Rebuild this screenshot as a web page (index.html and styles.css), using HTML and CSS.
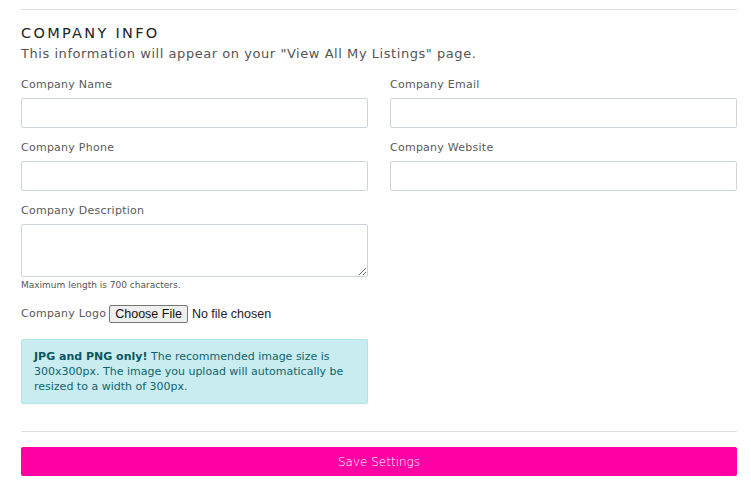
FILE: index.html
```html
<!DOCTYPE html>
<html>
<head>
<meta charset="utf-8">
<link rel="stylesheet" href="styles.css">
</head>
<body>
<div class="page">
  <hr class="rule top-rule">
  <h2 class="title">COMPANY INFO</h2>
  <p class="intro">This information will appear on your "View All My Listings" page.</p>
  <div class="grid">
    <div class="group">
      <label class="label">Company Name</label>
      <input class="input" type="text">
    </div>
    <div class="group">
      <label class="label">Company Email</label>
      <input class="input" type="text">
    </div>
    <div class="group">
      <label class="label">Company Phone</label>
      <input class="input" type="text">
    </div>
    <div class="group">
      <label class="label">Company Website</label>
      <input class="input" type="text">
    </div>
    <div class="group left">
      <label class="label">Company Description</label>
      <textarea class="textarea"></textarea>
      <div class="help">Maximum length is 700 characters.</div>
    </div>
    <div class="logo-row left">
      <span class="label inline">Company Logo</span><span class="file-btn">Choose File</span><span class="file-text">No file chosen</span>
    </div>
    <div class="alert left"><strong>JPG and PNG only!</strong> The recommended image size is 300x300px. The image you upload will automatically be resized to a width of 300px.</div>
  </div>
  <hr class="rule bottom-rule">
  <button class="save">Save Settings</button>
</div>
</body>
</html>
```
FILE: styles.css
```css
* { box-sizing: border-box; }
body {
  margin: 0;
  background: #fff;
  font-family: "DejaVu Sans", "Open Sans", sans-serif;
  color: #555;
}
.page {
  padding: 9px 14px 0 21px;
}
.rule {
  border: 0;
  border-top: 1px solid #dedede;
  margin: 0;
}
.title {
  margin: 14px 0 0;
  font-size: 14.5px;
  line-height: 18px;
  font-weight: 400;
  color: #222;
  letter-spacing: 2.3px;
}
.intro {
  margin: 3px 0 0;
  font-size: 13px;
  line-height: 18px;
  color: #555;
  letter-spacing: 0.55px;
}
.grid {
  display: grid;
  grid-template-columns: 347px 347px;
  column-gap: 22px;
  margin-top: 13px;
  align-items: start;
}
.left { grid-column: 1; }
.group {
  display: flex;
  flex-direction: column;
  margin-bottom: 11px;
}
.label {
  font-size: 11px;
  line-height: 16px;
  color: #5a5a5a;
  padding-top: 1px;
  margin-bottom: 5px;
  letter-spacing: 0.25px;
}
.label.inline { margin: 0; padding-top: 0; }
.input {
  height: 30px;
  border: 1px solid #ced4da;
  border-radius: 2px;
  margin: 0;
  padding: 0 8px;
  font: inherit;
}
.textarea {
  height: 53px;
  border: 1px solid #ced4da;
  border-radius: 2px;
  margin: 0;
  resize: vertical;
  font: inherit;
}
.help {
  margin-top: 2px;
  font-size: 9px;
  line-height: 12px;
  color: #555;
}
.logo-row {
  display: flex;
  align-items: center;
  height: 20px;
  margin-top: 2px;
}
.file-btn {
  margin-left: 3px;
  height: 18px;
  padding: 0 5px;
  border: 1px solid #767676;
  border-radius: 2px;
  background: #efefef;
  font-family: "Liberation Sans", Arial, sans-serif;
  font-size: 12.5px;
  line-height: 16px;
  color: #111;
}
.file-text {
  margin-left: 4px;
  font-family: "Liberation Sans", Arial, sans-serif;
  font-size: 12.5px;
  color: #222;
}
.alert {
  margin-top: 15px;
  height: 65px;
  padding: 9px 12px;
  background: #c8ecf0;
  border: 1px solid #b3e2e7;
  border-radius: 2px;
  font-size: 11px;
  line-height: 15px;
  color: #10646d;
}
.alert strong { font-weight: 700; color: #0b5560; }
.bottom-rule { margin-top: 27px; }
.save {
  display: block;
  width: 716px;
  height: 29px;
  margin-top: 15px;
  border: 0;
  border-radius: 2px;
  background: #ff00a5;
  color: #fff;
  font-family: "DejaVu Sans", sans-serif;
  font-weight: 200;
  font-size: 12px;
}
```
